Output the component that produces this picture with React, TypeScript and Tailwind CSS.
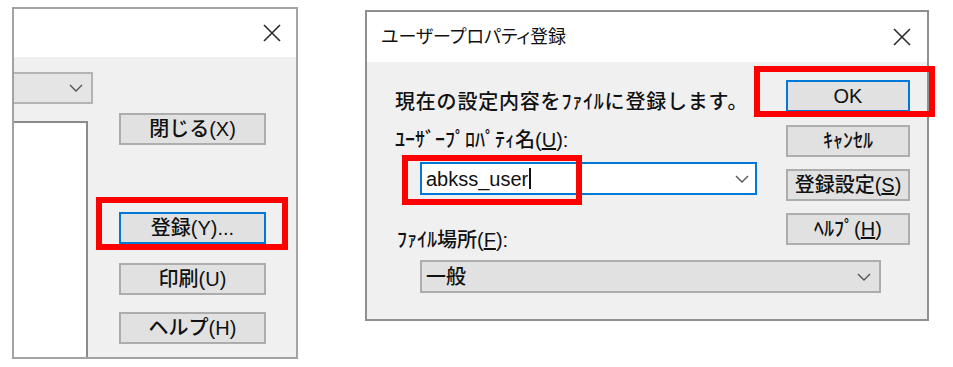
import React from 'react';

const font = "font-['Liberation_Sans','Noto_Sans_CJK_JP',sans-serif]";

function CloseIcon() {
  return (
    <svg width="18" height="18" viewBox="0 0 18 18" className="block">
      <path d="M1 1 L17 17 M17 1 L1 17" stroke="#2b2b2b" strokeWidth="1.6" fill="none" />
    </svg>
  );
}

function Chevron() {
  return (
    <svg width="14" height="8" viewBox="0 0 14 8" className="block">
      <polyline points="1,1 7,7 13,1" stroke="#555" strokeWidth="1.4" fill="none" />
    </svg>
  );
}

interface ButtonProps {
  children: React.ReactNode;
  primary?: boolean;
  className?: string;
}

function WinButton({ children, primary = false, className = '' }: ButtonProps) {
  return (
    <div
      className={`h-[32px] flex items-center justify-center bg-[#e1e1e1] border-2 text-[20px] leading-none text-[#111] ${
        primary ? 'border-[#0078d7]' : 'border-[#adadad]'
      } ${className}`}
    >
      {children}
    </div>
  );
}

function LeftDialog() {
  return (
    <div className="ml-[12px] mt-[7px] w-[286px] h-[352px] border-2 border-[#a3a3a3] flex flex-col">
      <div className="h-[48px] bg-white flex items-center justify-end pr-[15px]">
        <CloseIcon />
      </div>
      <div className="flex-1 bg-[#f0f0f0] flex">
        <div className="w-[79px] flex flex-col">
          <div className="mt-[15px] h-[32px] bg-[#e5e5e5] border-2 border-l-0 border-[#b4b4b4] flex items-center justify-end pr-[8px]">
            <Chevron />
          </div>
          <div className="mt-[17px] w-[74px] flex-1 bg-white border-t-2 border-r-2 border-[#8a8a8a]" />
        </div>
        <div className="ml-[26px] w-[147px] flex flex-col">
          <WinButton className="mt-[56px]">閉じる(X)</WinButton>
          <div className="relative mt-[67px]">
            <WinButton primary>登録(Y)...</WinButton>
            <div className="absolute left-[-23px] right-[-22px] top-[-15px] bottom-[-6px] border-[6px] border-[#ff0000]" />
          </div>
          <WinButton className="mt-[19px]">印刷(U)</WinButton>
          <WinButton className="mt-[17px]">ヘルプ(H)</WinButton>
        </div>
      </div>
    </div>
  );
}

function RightDialog() {
  return (
    <div className="ml-[67px] mt-[10px] w-[564px] h-[311px] border-2 border-[#8f8f8f] flex flex-col">
      <div className="h-[50px] bg-white flex items-center justify-between pl-[14px] pr-[16px]">
        <span className="text-[18px] leading-none font-normal text-[#111] [font-feature-settings:'palt']">ユーザープロパティ登録</span>
        <CloseIcon />
      </div>
      <div className="flex-1 bg-[#f0f0f0] pl-[28px] pr-[16px] text-[20px] text-[#111]">
        <div className="flex items-start">
          <div className="w-[362px] flex flex-col pt-[28px]">
            <div className="leading-[24px] whitespace-nowrap tracking-[0.8px]">現在の設定内容をﾌｧｲﾙに登録します。</div>
            <div className="mt-[14px] leading-[24px] whitespace-nowrap">
              ﾕｰｻﾞｰﾌﾟﾛﾊﾟﾃｨ名(<span className="underline">U</span>):
            </div>
            <div className="relative mt-[10px] ml-[25px] w-[337px] h-[33px] bg-white border-2 border-[#0078d7] flex items-center justify-between pl-[4px] pr-[6px]">
              <div className="flex items-center leading-none">
                <span>abkss_user</span>
                <span className="ml-[1px] w-[2px] h-[21px] bg-[#111]" />
              </div>
              <Chevron />
              <div className="absolute left-[-20px] top-[-9px] w-[180px] h-[50px] border-[6px] border-[#ff0000]" />
            </div>
            <div className="mt-[33px] ml-[2px] leading-[24px] whitespace-nowrap">
              ﾌｧｲﾙ場所(<span className="underline">F</span>):
            </div>
          </div>
          <div className="ml-[29px] w-[124px] pt-[18px] flex flex-col">
            <div className="relative">
              <WinButton primary>OK</WinButton>
              <div className="absolute left-[-32px] top-[-14px] w-[181px] h-[51px] border-[6px] border-[#ff0000]" />
            </div>
            <WinButton className="mt-[13px]">ｷｬﾝｾﾙ</WinButton>
            <WinButton className="mt-[12px]">
              登録設定(<span className="underline">S</span>)
            </WinButton>
            <WinButton className="mt-[12px]">
              ﾍﾙﾌﾟ(<span className="underline">H</span>)
            </WinButton>
          </div>
        </div>
        <div className="mt-[8px] ml-[25px] w-[461px] h-[33px] bg-[#e1e1e1] border-2 border-[#adadad] flex items-center justify-between pl-[4px] pr-[8px] leading-none">
          <span>一般</span>
          <Chevron />
        </div>
      </div>
    </div>
  );
}

export default function App() {
  return (
    <div className={`w-[953px] h-[367px] bg-white flex items-start font-medium ${font}`}>
      <LeftDialog />
      <RightDialog />
    </div>
  );
}
